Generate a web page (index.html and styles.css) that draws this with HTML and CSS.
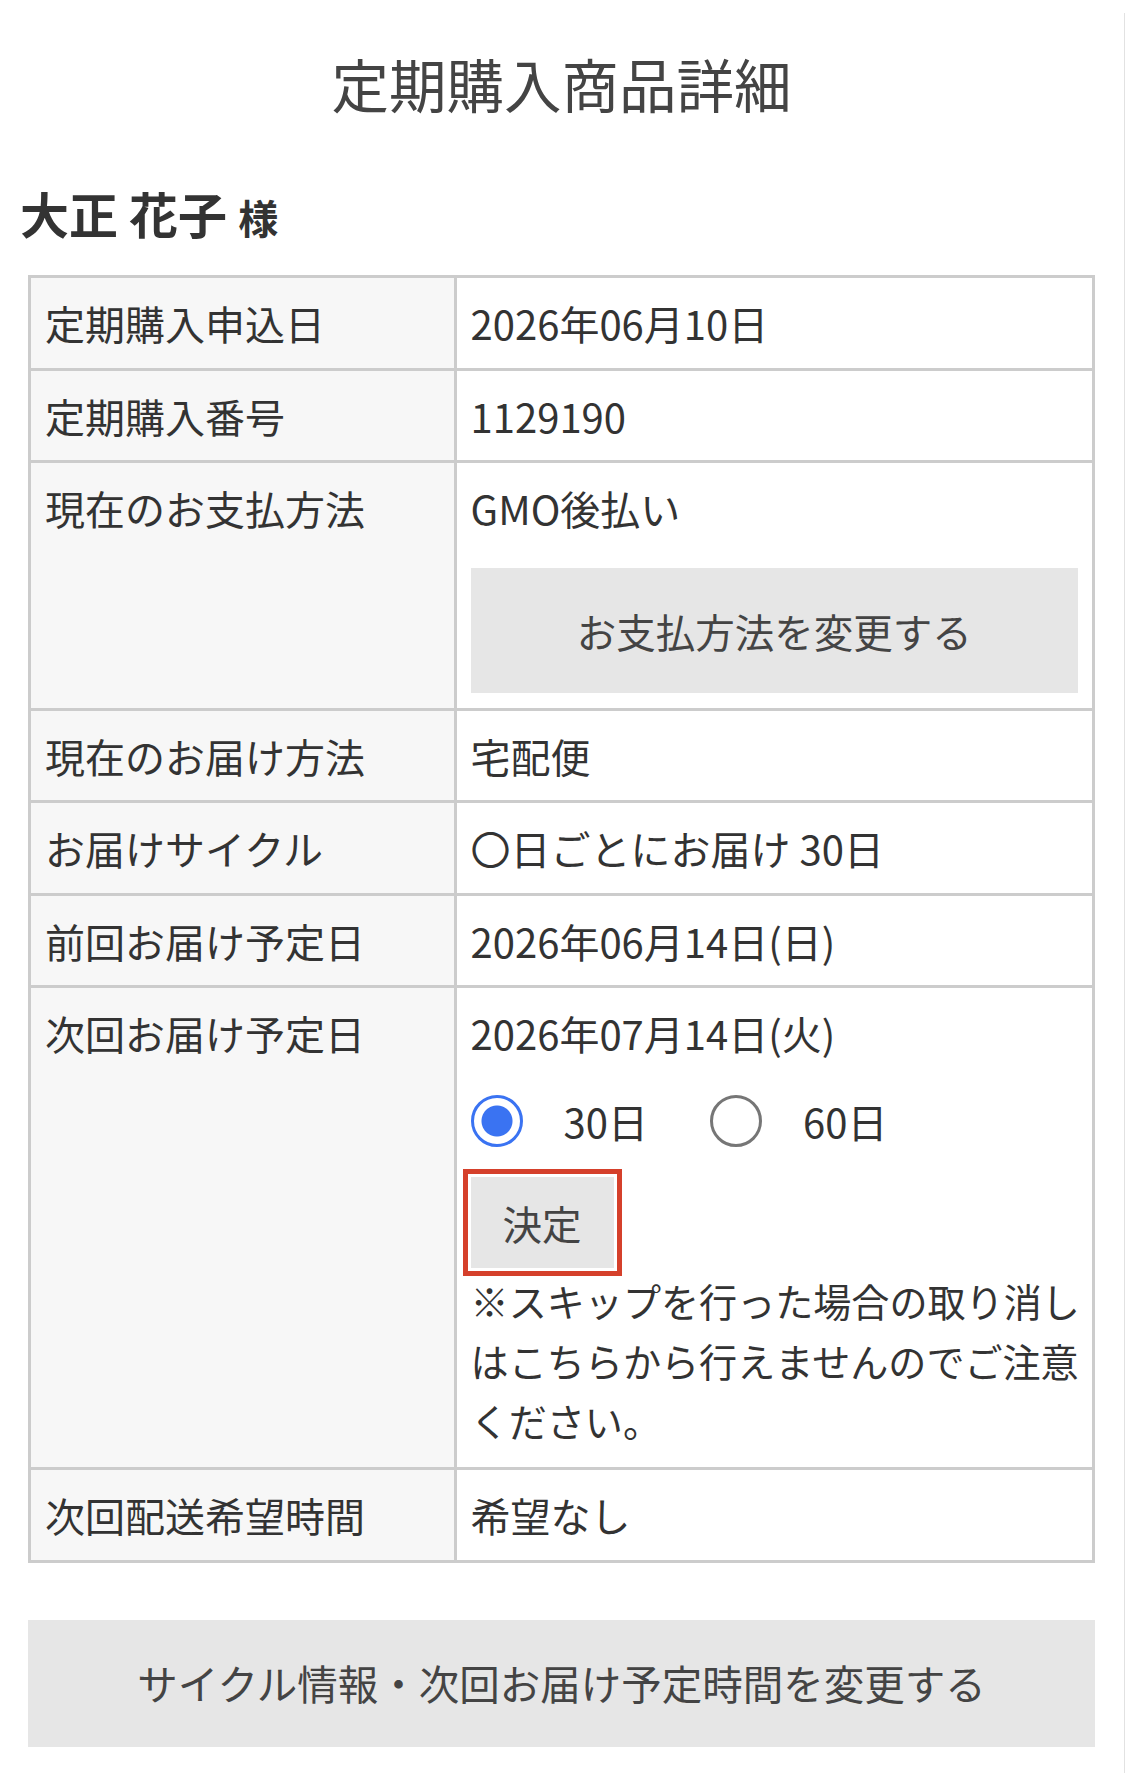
FILE: index.html
```html
<!DOCTYPE html>
<html lang="ja">
<head>
<meta charset="utf-8">
<title>定期購入商品詳細</title>
<link rel="stylesheet" href="styles.css">
</head>
<body>
<div class="page">
  <h1 class="title">定期購入商品詳細</h1>
  <h2 class="name">大正 花子 <span class="sama">様</span></h2>
  <table class="detail">
    <colgroup><col class="col-head"><col></colgroup>
    <tr><th>定期購入申込日</th><td>2026年06月10日</td></tr>
    <tr><th>定期購入番号</th><td>1129190</td></tr>
    <tr><th>現在のお支払方法</th><td>GMO後払い<button class="btn-gray btn-pay" type="button">お支払方法を変更する</button></td></tr>
    <tr><th>現在のお届け方法</th><td>宅配便</td></tr>
    <tr><th>お届けサイクル</th><td>〇日ごとにお届け 30日</td></tr>
    <tr><th>前回お届け予定日</th><td>2026年06月14日(日)</td></tr>
    <tr><th>次回お届け予定日</th><td>
      <div>2026年07月14日(火)</div>
      <div class="radios">
        <label class="opt"><input type="radio" name="cycle" checked><span class="opt-text">30日</span></label>
        <label class="opt"><input type="radio" name="cycle"><span class="opt-text">60日</span></label>
      </div>
      <button class="btn-decide" type="button">決定</button>
      <p class="note">※スキップを行った場合の取り消しはこちらから行えませんのでご注意ください。</p>
    </td></tr>
    <tr><th>次回配送希望時間</th><td>希望なし</td></tr>
  </table>
  <button class="btn-gray btn-wide" type="button">サイクル情報・次回お届け予定時間を変更する</button>
</div>
</body>
</html>
```

FILE: styles.css
```css
* { box-sizing: border-box; }

body {
  margin: 0;
  background: #fff;
  color: #333;
  font-family: "Noto Sans CJK JP", "Noto Sans", sans-serif;
}

.page {
  display: flow-root;
  margin-top: 13px;
  min-height: 1760px;
  padding: 0 29px 0 28px;
  border-right: 1px solid #e2e2e2;
}

.title {
  margin: 30px 0 0;
  font-size: 57.5px;
  font-weight: 400;
  line-height: 80px;
  text-align: center;
  color: #444;
}

.name {
  margin: 60px 0 0 -8px;
  font-size: 49px;
  font-weight: 700;
  line-height: 60px;
  color: #333;
}

.name .sama {
  font-size: 40px;
}

.detail {
  margin-top: 28px;
  width: 100%;
  table-layout: fixed;
  border-collapse: collapse;
  border: 3px solid #ccc;
  font-size: 40px;
  line-height: 60px;
}

.col-head {
  width: 40%;
}

.detail th,
.detail td {
  border: 3px solid #ccc;
  padding: 15px 14px 14.5px 14px;
  text-align: left;
  vertical-align: top;
  font-weight: 400;
}

.detail th {
  background: #f7f7f7;
  color: #333;
}

.detail td {
  background: #fff;
}

.btn-gray {
  display: block;
  width: 100%;
  border: 0;
  background: #e6e6e6;
  color: #444;
  font-family: inherit;
  font-size: 39.5px;
  line-height: 60px;
  padding: 0;
}

.btn-pay {
  height: 125px;
  margin-top: 30px;
}

.radios {
  display: flex;
  align-items: center;
  height: 60px;
  margin: 28px 0 23px;
}

.opt {
  display: flex;
  align-items: center;
}

.opt + .opt {
  margin-left: 62px;
}

.opt input {
  appearance: none;
  -webkit-appearance: none;
  margin: 0;
  width: 52px;
  height: 52px;
  border: 3px solid #767676;
  border-radius: 50%;
  background: #fff;
}

.opt input:checked {
  border-color: #3a73f2;
  background: radial-gradient(circle, #3a73f2 0 15px, #fff 16px);
}

.opt-text {
  margin-left: 41px;
}

.btn-decide {
  display: block;
  width: 149px;
  height: 97px;
  margin-left: -3px;
  padding: 0;
  border: 3px solid #fff;
  outline: 5px solid #d5402b;
  background: #e6e6e6;
  color: #444;
  font-family: inherit;
  font-size: 39.5px;
  line-height: 60px;
}

.note {
  margin: 0 -12px 1.5px 0;
  font-size: 38.1px;
  line-height: 60px;
}

.btn-wide {
  height: 127px;
  margin-top: 57px;
  font-size: 40.5px;
}
```
